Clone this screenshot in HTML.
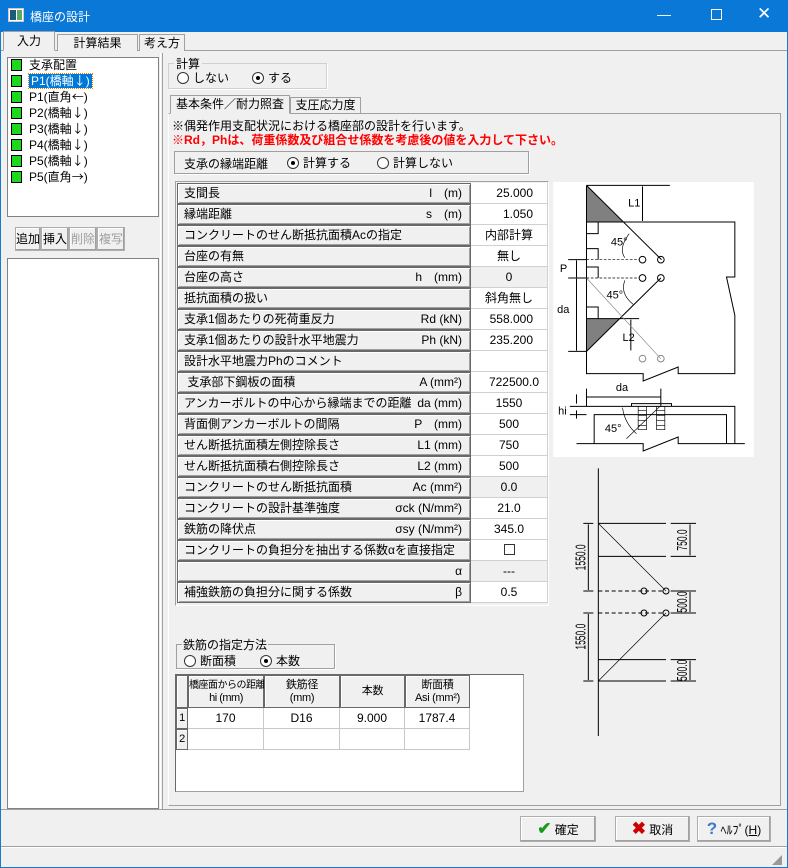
<!DOCTYPE html>
<html><head><meta charset="utf-8"><style>
*{margin:0;padding:0;box-sizing:border-box}
body{width:788px;height:868px;background:#f0f0f0;font-family:"Liberation Sans","Noto Sans CJK JP",sans-serif;font-size:12px;color:#000;position:relative;overflow:hidden}
.a{position:absolute}
.win{left:0;top:0;width:788px;height:868px;border:1px solid #1979ca}
.title{left:0;top:0;width:788px;height:32px;background:#0a78d7;color:#fff;font-size:12px}
.tab{border:1px solid #a0a0a0;border-bottom:none;background:#f0f0f0;text-align:center;line-height:16px}
.list{background:#fff;border:1px solid #828282}
.btn{background:#f0f0f0;border:1px solid #adadad;box-shadow:inset -1px -1px #a0a0a0,inset 1px 1px #fff;text-align:center}
.grp{border:1px solid #d0d0d0;box-shadow:1px 1px #fff}
.lab{background:#f0f0f0;border:1px solid #696969;box-shadow:inset 1px 1px #fff,inset -1px -1px #a0a0a0}
.row{position:absolute;left:177px;width:371px;height:21px}
.row .l{position:absolute;left:0;top:0;width:294px;height:21px;padding-left:6px;line-height:19px;font-size:12px}
.row .u{position:absolute;right:86px;top:0;line-height:21px}
.row .v{position:absolute;left:294px;top:0;width:77px;height:21px;background:#fff;border-bottom:1px solid #d0d0d0;border-right:1px solid #d0d0d0;line-height:20px;padding-right:14px;text-align:right}
.row .v.c{text-align:center;padding-right:0}
.row .v.g{background:#f0f0f0}
.radio{display:inline-block;width:12px;height:12px;border-radius:50%;border:1px solid #333;background:#fff;vertical-align:-2px;margin-right:4px;position:relative}
.radio.on:after{content:"";position:absolute;left:3px;top:3px;width:4px;height:4px;border-radius:50%;background:#000}
.ico{display:inline-block;width:11px;height:12px;background:#1ed81e;border:1px solid #000;vertical-align:-2px;margin-right:7px}
.li{position:absolute;left:10px;height:16px;line-height:16px;white-space:nowrap}
.ar{font-family:"Noto Sans CJK JP",sans-serif}
.gc{position:absolute;border-right:1px solid #c8c8c8;border-bottom:1px solid #c8c8c8;text-align:center;background:#fff}
.gh{position:absolute;background:#f0f0f0;border:1px solid #696969;box-shadow:inset 1px 1px #fff;text-align:center;line-height:13px;white-space:nowrap;font-size:11px;letter-spacing:-0.3px;overflow:visible}
</style></head><body>
<div class="a win"></div>
<div class="a title"><div class="a" style="left:8px;top:8px;width:16px;height:14px;background:#fff;border:1px solid #ccc"><div class="a" style="left:1px;top:1px;width:6px;height:10px;background:#1c5c7a"></div><div class="a" style="left:8px;top:1px;width:5px;height:10px;background:#5aa86a"></div></div>
<div class="a" style="left:30px;top:8px">橋座の設計</div>
<div class="a" style="left:657px;top:6px;font-size:14px">—</div>
<div class="a" style="left:711px;top:9px;width:11px;height:11px;border:1px solid #fff"></div>
<div class="a" style="left:757px;top:4px;font-size:17px">✕</div></div>
<div class="a" style="left:1px;top:50px;width:786px;height:1px;background:#a0a0a0"></div>
<div class="a tab" style="left:3px;top:31px;width:52px;height:20px;border-bottom:1px solid #f0f0f0;line-height:18px">入力</div>
<div class="a tab" style="left:57px;top:34px;width:81px;height:17px">計算結果</div>
<div class="a tab" style="left:139px;top:34px;width:46px;height:17px">考え方</div>
<div class="a list" style="left:7px;top:57px;width:152px;height:160px">
<div class="li" style="top:-1px;left:3px"><span class="ico"></span>支承配置</div>
<div class="li" style="top:15px;left:3px"><span class="ico"></span><span style="background:#0078d7;color:#fff;outline:1px dotted #e08000;padding:0 2px">P1(橋軸<span class="ar">↓</span>)</span></div>
<div class="li" style="top:31px;left:3px"><span class="ico"></span>P1(直角<span class="ar">←</span>)</div>
<div class="li" style="top:47px;left:3px"><span class="ico"></span>P2(橋軸<span class="ar">↓</span>)</div>
<div class="li" style="top:63px;left:3px"><span class="ico"></span>P3(橋軸<span class="ar">↓</span>)</div>
<div class="li" style="top:79px;left:3px"><span class="ico"></span>P4(橋軸<span class="ar">↓</span>)</div>
<div class="li" style="top:95px;left:3px"><span class="ico"></span>P5(橋軸<span class="ar">↓</span>)</div>
<div class="li" style="top:111px;left:3px"><span class="ico"></span>P5(直角<span class="ar">→</span>)</div>
</div>
<div class="a btn" style="left:15px;top:227px;width:26px;height:24px;line-height:22px">追加</div>
<div class="a btn" style="left:41px;top:227px;width:28px;height:24px;line-height:22px">挿入</div>
<div class="a btn" style="left:69px;top:227px;width:28px;height:24px;line-height:22px;color:#a0a0a0">削除</div>
<div class="a btn" style="left:97px;top:227px;width:28px;height:24px;line-height:22px;color:#a0a0a0">複写</div>
<div class="a list" style="left:7px;top:258px;width:152px;height:551px"></div>
<div class="a" style="left:160px;top:53px;width:1px;height:757px;background:#fff"></div>
<div class="a" style="left:162px;top:53px;width:1px;height:757px;background:#a0a0a0"></div>
<div class="a grp" style="left:168px;top:63px;width:159px;height:26px"></div>
<div class="a" style="left:174px;top:55px;background:#f0f0f0;padding:0 2px">計算</div>
<div class="a" style="left:177px;top:69px"><span class="radio"></span>しない</div>
<div class="a" style="left:252px;top:69px"><span class="radio on"></span>する</div>
<div class="a" style="left:168px;top:113px;width:613px;height:693px;border:1px solid #a0a0a0;border-left-color:#fff"></div>
<div class="a tab" style="left:170px;top:95px;width:120px;height:19px;border-bottom:1px solid #f0f0f0;line-height:17px">基本条件／耐力照査</div>
<div class="a tab" style="left:290px;top:97px;width:71px;height:16px;line-height:15px">支圧応力度</div>
<div class="a" style="left:172px;top:117px">※偶発作用支配状況における橋座部の設計を行います。</div>
<div class="a" style="left:172px;top:131px;color:#f00;font-weight:bold">※Rd，Phは、荷重係数及び組合せ係数を考慮後の値を入力して下さい。</div>
<div class="a grp" style="left:174px;top:151px;width:355px;height:23px;border-color:#a0a0a0"></div>
<div class="a" style="left:184px;top:155px">支承の縁端距離</div>
<div class="a" style="left:287px;top:154px"><span class="radio on"></span>計算する</div>
<div class="a" style="left:377px;top:154px"><span class="radio"></span>計算しない</div>
<div class="a" style="left:175px;top:181px;width:374px;height:425px;border:1px solid #a0a0a0;border-right-color:#fff;border-bottom-color:#fff"></div>
<div class="row" style="top:183px"><div class="l lab">支間長</div><div class="u">l　(m)</div><div class="v">25.000</div></div>
<div class="row" style="top:204px"><div class="l lab">縁端距離</div><div class="u">s　(m)</div><div class="v">1.050</div></div>
<div class="row" style="top:225px"><div class="l lab">コンクリートのせん断抵抗面積Acの指定</div><div class="v c">内部計算</div></div>
<div class="row" style="top:246px"><div class="l lab">台座の有無</div><div class="v c">無し</div></div>
<div class="row" style="top:267px"><div class="l lab">台座の高さ</div><div class="u">h　(mm)</div><div class="v c g">0</div></div>
<div class="row" style="top:288px"><div class="l lab">抵抗面積の扱い</div><div class="v c">斜角無し</div></div>
<div class="row" style="top:309px"><div class="l lab">支承1個あたりの死荷重反力</div><div class="u">Rd (kN)</div><div class="v">558.000</div></div>
<div class="row" style="top:330px"><div class="l lab">支承1個あたりの設計水平地震力</div><div class="u">Ph (kN)</div><div class="v">235.200</div></div>
<div class="row" style="top:351px"><div class="l lab">設計水平地震力Phのコメント</div><div class="v"></div></div>
<div class="row" style="top:372px"><div class="l lab">&nbsp;支承部下鋼板の面積</div><div class="u">A (mm²)</div><div class="v" style="padding-right:8px">722500.0</div></div>
<div class="row" style="top:393px"><div class="l lab">アンカーボルトの中心から縁端までの距離</div><div class="u">da (mm)</div><div class="v c">1550</div></div>
<div class="row" style="top:414px"><div class="l lab">背面側アンカーボルトの間隔</div><div class="u">P　(mm)</div><div class="v c">500</div></div>
<div class="row" style="top:435px"><div class="l lab">せん断抵抗面積左側控除長さ</div><div class="u">L1 (mm)</div><div class="v c">750</div></div>
<div class="row" style="top:456px"><div class="l lab">せん断抵抗面積右側控除長さ</div><div class="u">L2 (mm)</div><div class="v c">500</div></div>
<div class="row" style="top:477px"><div class="l lab">コンクリートのせん断抵抗面積</div><div class="u">Ac (mm²)</div><div class="v c g">0.0</div></div>
<div class="row" style="top:498px"><div class="l lab">コンクリートの設計基準強度</div><div class="u">σck (N/mm²)</div><div class="v c">21.0</div></div>
<div class="row" style="top:519px"><div class="l lab">鉄筋の降伏点</div><div class="u">σsy (N/mm²)</div><div class="v c">345.0</div></div>
<div class="row" style="top:540px"><div class="l lab">コンクリートの負担分を抽出する係数αを直接指定</div><div class="v c"><span style="display:inline-block;width:11px;height:11px;border:1px solid #333;vertical-align:-1px"></span></div></div>
<div class="row" style="top:561px"><div class="l lab"></div><div class="u">α</div><div class="v c g">---</div></div>
<div class="row" style="top:582px"><div class="l lab">補強鉄筋の負担分に関する係数</div><div class="u">β</div><div class="v c">0.5</div></div>
<svg class="a" style="left:553px;top:182px" width="201" height="275" viewBox="10 35 602 825" fill="none" stroke="#000" stroke-width="3">
<rect x="10" y="35" width="602" height="825" fill="#fff" stroke="none"/>
<polygon points="110,45 110,155 220,155" fill="#808080" stroke="none"/>
<polygon points="110,445 110,543 210,445" fill="#808080" stroke="none"/>
<path d="M110 45V610H280V632L385 590V610H555V435L530 320L555 320V155H110"/>
<path d="M110 45H360M278 48V152M110 45L335 268M110 543L333 323M110 445H268M243 448V540M55 543H110M55 268H110M55 323H110M80 270V321M80 325V541"/>
<path d="M110 323L333 565" stroke="#888" stroke-width="2"/>
<path d="M110 155h35v35h-35M110 235h35v33M110 290h35v33M110 410h35v35" />
<path d="M110 268H268M110 323H268" stroke-dasharray="8 5" stroke-width="2"/>
<circle cx="278" cy="268" r="10"/><circle cx="333" cy="268" r="10"/><circle cx="278" cy="323" r="10"/><circle cx="333" cy="323" r="10"/>
<circle cx="278" cy="565" r="10" stroke="#888"/><circle cx="333" cy="565" r="10" stroke="#888"/>
<path d="M238 190Q205 235 225 262M225 330Q210 370 250 402" stroke-width="2"/>
<path d="M110 680H333M110 655V708M333 655V708M80 672V700M80 720V745M60 708H110M60 733H110"/>
<path d="M110 708H555V820M133 820V733H530V820M80 820H280V842L385 800V820H585M245 708V700H365V708"/>
<path d="M265 708h25v70h-25zM320 708h25v70h-25zM265 720h25M265 735h25M265 750h25M265 765h25M320 720h25M320 735h25M320 750h25M320 765h25M230 805L330 708M218 712Q225 760 260 790" stroke-width="2"/>
<g fill="#000" stroke="none" font-size="33" font-family="Liberation Sans,sans-serif">
<text x="235" y="108">L1</text><text x="183" y="226">45°</text><text x="30" y="305">P</text><text x="22" y="428">da</text><text x="170" y="385">45°</text><text x="218" y="512">L2</text><text x="198" y="662">da</text><text x="25" y="732">hi</text><text x="165" y="785">45°</text></g>
</svg>
<svg class="a" style="left:550px;top:460px" width="160" height="320" viewBox="0 0 480 960" fill="none" stroke="#000" stroke-width="3">
<path d="M145 25V828M145 190H348M145 289H348M145 599H348M145 663H348M362 190H438M362 289H438M362 393H438M362 459H438M362 599H438M362 663H438M100 190H130M100 393H130M100 459H130M100 663H130M115 193V390M115 462V660M420 193V286M420 396V456M420 602V660"/>
<path d="M145 190L348 393M145 663L348 459" stroke-width="2"/>
<path d="M145 393H340M145 459H340" stroke-dasharray="12 8"/>
<circle cx="282" cy="393" r="9"/><circle cx="348" cy="393" r="9"/><circle cx="282" cy="459" r="9"/><circle cx="348" cy="459" r="9"/>
<g fill="#000" stroke="none" font-size="34" font-family="Liberation Sans,sans-serif" text-anchor="middle">
<text transform="translate(106 292) rotate(-90) scale(0.75 1.3)">1550.0</text>
<text transform="translate(106 530) rotate(-90) scale(0.75 1.3)">1550.0</text>
<text transform="translate(411 240) rotate(-90) scale(0.75 1.3)">750.0</text>
<text transform="translate(411 426) rotate(-90) scale(0.75 1.3)">500.0</text>
<text transform="translate(411 631) rotate(-90) scale(0.75 1.3)">500.0</text></g>
</svg>
<div class="a grp" style="left:176px;top:644px;width:159px;height:25px;border-color:#a0a0a0"></div>
<div class="a" style="left:182px;top:636px;background:#f0f0f0;padding:0 1px">鉄筋の指定方法</div>
<div class="a" style="left:184px;top:652px"><span class="radio"></span>断面積</div>
<div class="a" style="left:260px;top:652px"><span class="radio on"></span>本数</div>
<div class="a" style="left:175px;top:674px;width:349px;height:118px;background:#fff;border:1px solid #a0a0a0;border-left-color:#696969;border-top-color:#696969"></div>
<div class="gh" style="left:176px;top:675px;width:12px;height:33px"></div>
<div class="gh" style="left:188px;top:675px;width:76px;height:33px;padding-top:3px;font-size:10px;letter-spacing:-0.5px">橋座面からの距離<br><span style="font-size:11px">hi (mm)</span></div>
<div class="gh" style="left:264px;top:675px;width:76px;height:33px;padding-top:3px">鉄筋径<br>(mm)</div>
<div class="gh" style="left:340px;top:675px;width:65px;height:33px;line-height:31px">本数</div>
<div class="gh" style="left:405px;top:675px;width:65px;height:33px;padding-top:3px">断面積<br>Asi (mm²)</div>
<div class="gh" style="left:176px;top:708px;width:12px;height:21px;line-height:19px">1</div>
<div class="gh" style="left:176px;top:729px;width:12px;height:21px;line-height:19px">2</div>
<div class="gc" style="left:188px;top:708px;width:76px;height:21px;line-height:20px">170</div>
<div class="gc" style="left:264px;top:708px;width:76px;height:21px;line-height:20px">D16</div>
<div class="gc" style="left:340px;top:708px;width:65px;height:21px;line-height:20px">9.000</div>
<div class="gc" style="left:405px;top:708px;width:65px;height:21px;line-height:20px">1787.4</div>
<div class="gc" style="left:188px;top:729px;width:76px;height:21px"></div>
<div class="gc" style="left:264px;top:729px;width:76px;height:21px"></div>
<div class="gc" style="left:340px;top:729px;width:65px;height:21px"></div>
<div class="gc" style="left:405px;top:729px;width:65px;height:21px"></div>
<div class="a" style="left:1px;top:809px;width:786px;height:1px;background:#a0a0a0"></div>
<div class="a btn" style="left:520px;top:816px;width:76px;height:26px;line-height:24px"><span style="color:#1a9a1a;font-weight:bold;font-size:17px">✔</span> 確定</div>
<div class="a btn" style="left:615px;top:816px;width:75px;height:26px;line-height:24px"><span style="color:#c00;font-weight:bold;font-size:17px">✖</span> 取消</div>
<div class="a btn" style="left:697px;top:816px;width:74px;height:26px;line-height:24px"><span style="color:#3a7ac8;font-weight:bold;font-size:17px">?</span> ﾍﾙﾌﾟ(<u>H</u>)</div>
<div class="a" style="left:1px;top:846px;width:786px;height:1px;background:#a0a0a0"></div>
<div class="a" style="left:1px;top:847px;width:786px;height:1px;background:#fff"></div>
<div class="a" style="left:772px;top:852px;color:#999;font-size:10px">◢</div>
</body></html>
